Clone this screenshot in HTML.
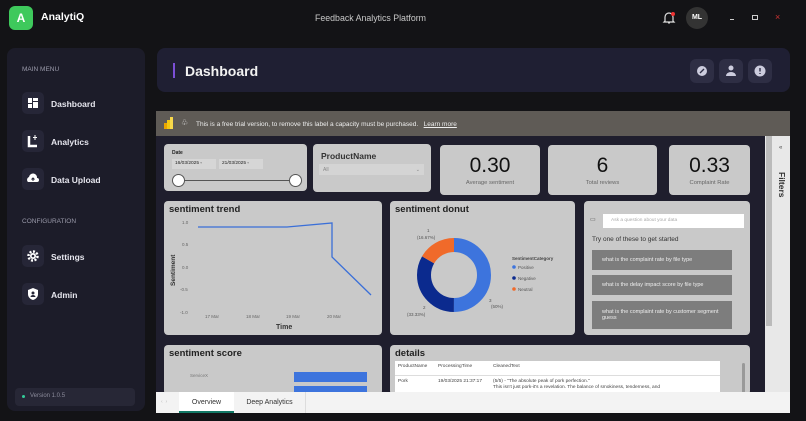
<!DOCTYPE html>
<html><head><meta charset="utf-8"><style>
*{box-sizing:border-box;margin:0;padding:0}
body{width:806px;height:421px;background:#131316;font-family:"Liberation Sans",sans-serif;position:relative;overflow:hidden;color:#fff}
.a{position:absolute}
.card{position:absolute;background:#c9c9c9;border-radius:4px;color:#222}
.ni{position:absolute;left:22px;width:22px;height:22px;border-radius:5px;background:#262637}
.nl{position:absolute;left:51px;font-size:8.5px;font-weight:bold;color:#e6e6ee}
.hb{position:absolute;top:59px;width:24px;height:24px;border-radius:6px;background:#2e2e44}
.q{position:absolute;left:8px;width:140px;background:#7d7d7d;color:#eee;font-size:5.5px;padding:0 10px;display:flex;align-items:center}
</style></head><body>
<div class="a" style="left:9px;top:6px;width:24px;height:24px;border-radius:6px;background:#3ec95c;font-weight:bold;font-size:12px;text-align:center;line-height:24px">A</div>
<div class="a" style="left:41px;top:11px;font-size:10.5px;font-weight:bold">AnalytiQ</div>
<div class="a" style="left:315px;top:13px;font-size:8.8px;color:#c8c8c8">Feedback Analytics Platform</div>
<svg class="a" style="left:662px;top:11px" width="14" height="14" viewBox="0 0 14 14"><path d="M3 10V6a4 4 0 0 1 8 0v4l1 1H2z" fill="none" stroke="#ddd" stroke-width="1.2"/><path d="M6 12h2" stroke="#ddd"/><circle cx="11" cy="3" r="2" fill="#e33"/></svg>
<div class="a" style="left:686px;top:7px;width:22px;height:22px;border-radius:50%;background:#333;font-size:7px;font-weight:bold;text-align:center;line-height:22px">ML</div>
<div class="a" style="left:730px;top:19px;width:4px;height:1px;background:#ccc"></div>
<div class="a" style="left:752px;top:15px;width:6px;height:5px;border:1px solid #ccc"></div>
<div class="a" style="left:775px;top:12px;font-size:9px;color:#c33">×</div>
<div class="a" style="left:7px;top:48px;width:138px;height:363px;background:#1c1c29;border-radius:8px"></div>
<div class="a" style="left:22px;top:66px;font-size:6.5px;color:#9a9aaa">MAIN MENU</div>
<div class="ni" style="top:92px"><svg width="22" height="22"><rect x="6" y="6" width="4" height="5" fill="#fff"/><rect x="11" y="6" width="5" height="3" fill="#fff"/><rect x="6" y="12" width="4" height="4" fill="#fff"/><rect x="11" y="10" width="5" height="6" fill="#fff"/></svg></div>
<div class="nl" style="top:99px">Dashboard</div>
<div class="ni" style="top:130px"><svg width="22" height="22"><path d="M7 6v10h8" stroke="#fff" stroke-width="2.5" fill="none"/><path d="M13 5v5M11 7.5h4" stroke="#fff"/></svg></div>
<div class="nl" style="top:137px">Analytics</div>
<div class="ni" style="top:168px"><svg width="22" height="22"><path d="M6 14a3 3 0 0 1 1-5 4 4 0 0 1 8 1 2 2 0 0 1 0 4z" fill="#fff"/><path d="M11 13v-3M9.5 11.5L11 10l1.5 1.5" stroke="#262637"/></svg></div>
<div class="nl" style="top:175px">Data Upload</div>
<div class="a" style="left:22px;top:218px;font-size:6.5px;color:#9a9aaa">CONFIGURATION</div>
<div class="ni" style="top:245px"><svg width="22" height="22"><circle cx="11" cy="11" r="4.5" fill="none" stroke="#fff" stroke-width="2.5" stroke-dasharray="2 1.5"/><circle cx="11" cy="11" r="3" fill="#fff"/><circle cx="11" cy="11" r="1.3" fill="#262637"/></svg></div>
<div class="nl" style="top:252px">Settings</div>
<div class="ni" style="top:283px"><svg width="22" height="22"><path d="M11 5l5 2v4c0 3-2 5-5 6-3-1-5-3-5-6V7z" fill="#fff"/><circle cx="11" cy="10" r="1.5" fill="#262637"/><path d="M8.5 14a2.5 2 0 0 1 5 0" fill="#262637"/></svg></div>
<div class="nl" style="top:290px">Admin</div>
<div class="a" style="left:15px;top:388px;width:120px;height:18px;background:#272736;border-radius:4px"></div>
<div class="a" style="left:22px;top:395px;width:3px;height:3px;border-radius:50%;background:#3c9"></div>
<div class="a" style="left:30px;top:393px;font-size:6px;color:#8a8a9a">Version 1.0.5</div>
<div class="a" style="left:157px;top:48px;width:633px;height:44px;background:#1f1f33;border-radius:8px"></div>
<div class="a" style="left:173px;top:63px;width:2px;height:15px;background:#7b4fd6"></div>
<div class="a" style="left:185px;top:63px;font-size:14px;font-weight:bold;color:#f2f2f2">Dashboard</div>
<div class="hb" style="left:690px"><svg width="24" height="24"><circle cx="12" cy="12" r="5" fill="#ccd"/><path d="M10 14l4-4" stroke="#2e2e44" stroke-width="1.3"/></svg></div>
<div class="hb" style="left:719px"><svg width="24" height="24"><circle cx="12" cy="9" r="2.5" fill="#ccd"/><path d="M7 17a5 4 0 0 1 10 0z" fill="#ccd"/></svg></div>
<div class="hb" style="left:748px"><svg width="24" height="24"><circle cx="12" cy="12" r="5.5" fill="#ccd"/><path d="M12 9v3.5M12 14v1" stroke="#2e2e44" stroke-width="1.4"/></svg></div>
<div class="a" style="left:156px;top:111px;width:634px;height:302px;background:#1f1e2d"></div>
<div class="a" style="left:156px;top:111px;width:634px;height:25px;background:#5f5b56"></div>
<svg class="a" style="left:163px;top:116px" width="12" height="14"><rect x="1" y="7" width="3" height="6" fill="#e8a400"/><rect x="4" y="4" width="3" height="9" fill="#f2c811"/><rect x="7" y="1" width="3" height="12" fill="#f7d84a"/></svg>
<div class="a" style="left:181px;top:118px;font-size:8px;color:#ddd">♧</div>
<div class="a" style="left:196px;top:121px;font-size:6.5px;color:#eee">This is a free trial version, to remove this label a capacity must be purchased. &nbsp;&nbsp;<u>Learn more</u></div>
<div class="a" style="left:765px;top:136px;width:25px;height:256px;background:#e8e8e8"></div>
<div class="a" style="left:779px;top:145px;font-size:6px;color:#444">«</div>
<div class="a" style="top:172px;transform:rotate(90deg);transform-origin:left top;left:787px;font-size:8.5px;font-weight:bold;color:#333">Filters</div>
<div class="a" style="left:766px;top:136px;width:6px;height:190px;background:#bbb"></div>
<div class="card" style="left:164px;top:144px;width:143px;height:47px">
<div class="a" style="left:8px;top:6px;font-size:5px;font-weight:bold">Date</div>
<div class="a" style="left:8px;top:15px;width:44px;height:10px;background:#d6d6d6;font-size:4.8px;padding:2px 3px">16/03/2025 ▫</div>
<div class="a" style="left:55px;top:15px;width:44px;height:10px;background:#d6d6d6;font-size:4.8px;padding:2px 3px">21/03/2025 ▫</div>
<div class="a" style="left:14px;top:36px;width:118px;height:1px;background:#555"></div>
<div class="a" style="left:8px;top:30px;width:13px;height:13px;border-radius:50%;background:#fff;border:1px solid #555"></div>
<div class="a" style="left:125px;top:30px;width:13px;height:13px;border-radius:50%;background:#fff;border:1px solid #555"></div></div>
<div class="card" style="left:313px;top:144px;width:118px;height:48px">
<div class="a" style="left:8px;top:7px;font-size:8.5px;font-weight:bold;color:#333">ProductName</div>
<div class="a" style="left:6px;top:20px;width:105px;height:11px;background:#d4d4d4;font-size:5px;color:#888;padding:3px 4px">All<span style="float:right">⌄</span></div></div>
<div class="card" style="left:440px;top:145px;width:100px;height:50px;text-align:center"><div style="font-size:21px;margin-top:9px;color:#111">0.30</div><div style="font-size:5.8px;color:#666;margin-top:2px">Average sentiment</div></div>
<div class="card" style="left:548px;top:145px;width:109px;height:50px;text-align:center"><div style="font-size:21px;margin-top:9px;color:#111">6</div><div style="font-size:5.8px;color:#666;margin-top:2px">Total reviews</div></div>
<div class="card" style="left:669px;top:145px;width:81px;height:50px;text-align:center"><div style="font-size:21px;margin-top:9px;color:#111">0.33</div><div style="font-size:5.8px;color:#666;margin-top:2px">Complaint Rate</div></div>
<div class="card" style="left:164px;top:201px;width:218px;height:134px">
<div class="a" style="left:5px;top:3px;font-size:9.5px;font-weight:bold">sentiment trend</div>
<svg class="a" style="left:0;top:0" width="218" height="134" font-family="Liberation Sans" font-size="4.5" fill="#666">
<text x="18" y="23">1.0</text><text x="18" y="45">0.5</text><text x="18" y="68">0.0</text><text x="16" y="90">-0.5</text><text x="16" y="113">-1.0</text>
<text x="41" y="117">17 Mar</text><text x="82" y="117">18 Mar</text><text x="122" y="117">19 Mar</text><text x="163" y="117">20 Mar</text>
<text x="112" y="128" font-size="7" font-weight="bold" fill="#333">Time</text>
<text transform="translate(11,85) rotate(-90)" font-size="6.5" font-weight="bold" fill="#333">Sentiment</text>
<polyline points="34,26 123,26 168,22 168,56 207,94" fill="none" stroke="#3a6fd8" stroke-width="1.3"/></svg></div>
<div class="card" style="left:390px;top:201px;width:185px;height:134px">
<div class="a" style="left:5px;top:3px;font-size:9.5px;font-weight:bold">sentiment donut</div>
<svg class="a" style="left:0;top:0" width="185" height="134" font-family="Liberation Sans" font-size="4.5" fill="#555">
<g transform="translate(64,74)"><circle r="30" fill="none" stroke="#3d74dd" stroke-width="14" stroke-dasharray="94.2 200" transform="rotate(-90)"/>
<circle r="30" fill="none" stroke="#0b2a8e" stroke-width="14" stroke-dasharray="0 94.2 62.8 200" transform="rotate(-90)"/>
<circle r="30" fill="none" stroke="#f06a2a" stroke-width="14" stroke-dasharray="0 157 31.4 200" transform="rotate(-90)"/></g>
<text x="37" y="31">1</text><text x="27" y="38">(16.67%)</text><text x="99" y="101">3</text><text x="101" y="107">(50%)</text><text x="33" y="108">2</text><text x="17" y="115">(33.33%)</text>
<text x="122" y="59" font-weight="bold" fill="#444">SentimentCategory</text>
<circle cx="124" cy="66" r="1.8" fill="#3d74dd"/><text x="128" y="68">Positive</text>
<circle cx="124" cy="77" r="1.8" fill="#0b2a8e"/><text x="128" y="79">Negative</text>
<circle cx="124" cy="88" r="1.8" fill="#f06a2a"/><text x="128" y="90">Neutral</text></svg></div>
<div class="card" style="left:584px;top:201px;width:166px;height:134px">
<div class="a" style="left:6px;top:15px;font-size:6px;color:#555">▭</div>
<div class="a" style="left:19px;top:13px;width:141px;height:14px;background:#fff;font-size:4.8px;color:#aaa;padding:4px 8px">Ask a question about your data</div>
<div class="a" style="left:8px;top:35px;font-size:6.5px;color:#333">Try one of these to get started</div>
<div class="q" style="top:49px;height:20px">what is the complaint rate by file type</div>
<div class="q" style="top:74px;height:20px">what is the delay impact score by file type</div>
<div class="q" style="top:100px;height:28px">what is the complaint rate by customer segment guess</div></div>
<div class="card" style="left:164px;top:345px;width:218px;height:50px">
<div class="a" style="left:5px;top:3px;font-size:9.5px;font-weight:bold">sentiment score</div>
<div class="a" style="left:26px;top:28px;font-size:4.5px;color:#777">ServiceX</div>
<div class="a" style="left:130px;top:27px;width:73px;height:10px;background:#3d74dd"></div>
<div class="a" style="left:130px;top:41px;width:73px;height:9px;background:#3d74dd"></div></div>
<div class="card" style="left:390px;top:345px;width:360px;height:50px">
<div class="a" style="left:5px;top:3px;font-size:9.5px;font-weight:bold">details</div>
<div class="a" style="left:5px;top:16px;width:325px;height:34px;background:#fff;font-size:4.8px;color:#444">
<div class="a" style="left:3px;top:3px">ProductName</div><div class="a" style="left:43px;top:3px">ProcessingTime</div><div class="a" style="left:98px;top:3px">CleanedText</div>
<div class="a" style="left:0;top:14px;width:325px;height:1px;background:#ddd"></div>
<div class="a" style="left:3px;top:18px">Pork</div><div class="a" style="left:43px;top:18px">19/03/2025 21:37:17</div><div class="a" style="left:98px;top:18px;width:220px;line-height:6px">(5/5) - "The absolute peak of pork perfection."<br>This isn't just pork-it's a revelation. The balance of smokiness, tenderness, and</div></div>
<div class="a" style="left:352px;top:18px;width:3px;height:30px;background:#999;border-radius:2px"></div></div>
<div class="a" style="left:156px;top:392px;width:634px;height:21px;background:#f3f3f3"></div>
<div class="a" style="left:161px;top:399px;font-size:5px;color:#bbb">‹ &nbsp;›</div>
<div class="a" style="left:179px;top:392px;width:55px;height:21px;background:#fff;border-bottom:2px solid #117865;font-size:7px;color:#333;text-align:center;line-height:21px">Overview</div>
<div class="a" style="left:234px;top:392px;width:72px;height:21px;border-right:1px solid #ddd;font-size:7px;color:#333;text-align:center;line-height:21px">Deep Analytics</div>
</body></html>
